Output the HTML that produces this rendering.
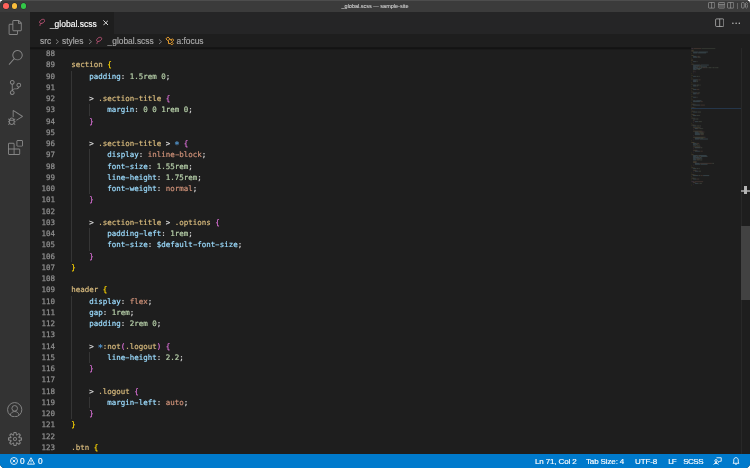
<!DOCTYPE html>
<html lang="en">
<head>
<meta charset="utf-8">
<title>_global.scss — sample-site</title>
<style>
html,body{margin:0;padding:0;}
body{width:750px;height:468px;overflow:hidden;background:#ffffff;position:relative;font-family:"Liberation Sans",sans-serif;}
#win{will-change:transform;border-radius:4.5px;position:absolute;left:0;top:0;width:750px;height:468px;overflow:hidden;background:#1e1e1e;}
.abs{position:absolute;}
#titlebar{left:0;top:0;width:750px;height:11.9px;background:#3b3b3b;}
#titlebar .hl{left:0;top:0;width:750px;height:1px;background:#5a5a5a;opacity:.6}
.tl{position:absolute;width:5.4px;height:5.4px;border-radius:50%;top:3.2px;box-shadow:0 0 0 0.5px rgba(0,0,0,.3);}
#title{left:0;width:750px;top:0;height:12.2px;line-height:12.2px;text-align:center;color:#cfcfcf;font-size:5.5px;-webkit-text-stroke:0.1px;letter-spacing:0;}
#activity{left:0;top:11.9px;width:30px;height:442px;background:#333333;}
#tabs{left:30px;top:11.9px;width:720px;height:22.2px;background:#252526;}
#tab{left:30px;top:11.9px;width:84.2px;height:22.2px;background:#1e1e1e;}
#crumbs{left:30px;top:34.1px;width:720px;height:13.7px;background:#1e1e1e;}
.ui{-webkit-text-stroke:0.15px;position:absolute;white-space:pre;font-size:8.4px;line-height:10px;color:#cccccc;}
#editor{left:30px;top:47.8px;width:720px;height:406.4px;background:#1e1e1e;}
.ln{-webkit-text-stroke:0.25px;position:absolute;left:30px;width:24.9px;text-align:right;height:11.25px;line-height:11.25px;font-family:"DejaVu Sans Mono","Liberation Mono",monospace;font-size:7.475px;color:#8e8e8e;white-space:pre;}
.cl{-webkit-text-stroke:0.2px;position:absolute;left:71.3px;height:11.25px;line-height:11.25px;font-family:"DejaVu Sans Mono","Liberation Mono",monospace;font-size:7.475px;color:#d4d4d4;white-space:pre;}
.hy{display:inline-block;font-style:normal;transform:scaleX(1.7);}
.as{display:inline-block;font-style:normal;width:4.5px;font-size:9px;line-height:0;position:relative;top:2.2px;left:-0.45px;}
.ig{position:absolute;width:1px;background:#353535;}
#shadow{left:30px;top:46.8px;width:661px;height:3.2px;background:linear-gradient(#00000000,#00000088 30%,#00000000);}
#status{left:0;top:454.25px;width:750px;height:13.75px;background:#007acc;}
#status .ui{color:#ffffff;font-size:8px;letter-spacing:-0.13px;line-height:13.75px;top:0.6px;}
#minimap{left:690.5px;top:47.8px;width:51px;height:406.4px;}
#sbar{left:741.3px;top:47.8px;width:8.7px;height:406.4px;border-left:1px solid #282828;box-sizing:border-box;}
#slider{left:741.3px;top:226.3px;width:8.7px;height:73.5px;background:#424242;}
</style>
</head>
<body>
<div id="win">
<div id="titlebar" class="abs"><div class="hl abs"></div>
<div class="tl" style="left:3.3px;background:#fe625b"></div>
<div class="tl" style="left:12px;background:#fbbe3c"></div>
<div class="tl" style="left:20.8px;background:#33c748"></div>
<div id="title" class="abs">_global.scss — sample-site</div>
</div>
<div id="activity" class="abs"></div>
<svg class="abs" style="left:7.5px;top:19.7px" width="15" height="15" viewBox="0 0 24 24" fill="#858585"><path d="M17.5 0h-9L7 1.500V6H2.500L1 7.500v15.070L2.500 24h12.070L16 22.570V18h4.700l1.300-1.430V4.500L17.500 0zm0 2.120l2.380 2.380H17.500V2.120zm-3 20.380h-12v-15H7v9.070L8.500 18h6v4.500zm6-6h-12v-15H16V6h4.500v10.500z"/></svg>
<svg class="abs" style="left:7.5px;top:49.7px" width="15" height="15" viewBox="0 0 24 24" fill="#858585"><path d="M15.250 0a8.250 8.250 0 0 0-6.180 13.720L1 22.880l1.120 1 8.050-9.120A8.251 8.251 0 1 0 15.250.010V0zm0 15a6.750 6.750 0 1 1 0-13.500 6.750 6.750 0 0 1 0 13.500z"/></svg>
<svg class="abs" style="left:7.5px;top:79.7px" width="15" height="15" viewBox="0 0 24 24" fill="#858585"><path d="M21.007 8.222A3.738 3.738 0 0 0 15.045 5.200a3.737 3.737 0 0 0 1.156 6.583 2.988 2.988 0 0 1-2.668 1.670h-2.990a4.456 4.456 0 0 0-2.989 1.165V7.400a3.737 3.737 0 1 0-1.494 0v9.117a3.776 3.776 0 1 0 1.816.099 2.990 2.990 0 0 1 2.668-1.667h2.990a4.484 4.484 0 0 0 4.223-3.039 3.736 3.736 0 0 0 3.250-3.687zM4.565 3.738a2.242 2.242 0 1 1 4.484 0 2.242 2.242 0 0 1-4.484 0zm4.484 16.441a2.242 2.242 0 1 1-4.484 0 2.242 2.242 0 0 1 4.484 0zm8.221-9.715a2.242 2.242 0 1 1 0-4.485 2.242 2.242 0 0 1 0 4.485z"/></svg>
<svg class="abs" style="left:7.5px;top:109.7px" width="15" height="15" viewBox="0 0 24 24" fill="#858585"><path d="M10.940 13.500l-1.320 1.320a3.730 3.730 0 0 0-7.240 0L1.060 13.500 0 14.560l1.720 1.720-.220.220V18H0v1.500h1.500v.080c.077.489.214.966.410 1.420L0 22.940 1.060 24l1.650-1.650A4.308 4.308 0 0 0 6 24a4.310 4.310 0 0 0 3.290-1.650L10.940 24 12 22.940 10.090 21c.198-.464.336-.951.410-1.450v-.100H12V18h-1.500v-1.500l-.220-.220L12 14.560l-1.060-1.060zM6 13.500a2.250 2.250 0 0 1 2.250 2.250h-4.500A2.250 2.250 0 0 1 6 13.500zm3 6a3.330 3.330 0 0 1-3 3 3.330 3.330 0 0 1-3-3v-2.250h6v2.250zm14.760-9.900v1.260L13.500 17.370V15.600l8.500-5.370L9 2v9.460a5.070 5.070 0 0 0-1.500-.720V.630L8.640 0l15.120 9.600z"/></svg>
<svg class="abs" style="left:7.5px;top:139.7px" width="15" height="15" viewBox="0 0 24 24" fill="#858585"><path d="M13.500 1.500L15 0h7.500L24 1.500V9l-1.500 1.500H15L13.500 9V1.500zm1.500 0V9h7.500V1.500H15zM0 15V6l1.500-1.500H9L10.500 6v7.500H18l1.500 1.500v7.500L18 24H1.500L0 22.500V15zm9-1.500V6H1.500v7.500H9zM9 15H1.500v7.500H9V15zm1.500 7.500H18V15h-7.500v7.500z"/></svg>
<svg class="abs" style="left:7.3px;top:401.6px" width="15.4" height="15.4" viewBox="0 0 16 16" fill="none" stroke="#858585" stroke-width="1"><circle cx="8" cy="8" r="7.4"/><circle cx="8" cy="6.6" r="2.9"/><path d="M3.4 13.6c.5-2.300 2.300-3.700 4.600-3.700s4.100 1.400 4.600 3.700"/></svg>
<svg class="abs" style="left:7px;top:431.2px" width="16" height="16" viewBox="0 0 16 16" fill="#858585"><path fill-rule="evenodd" clip-rule="evenodd" d="M9.100 4.400L8.600 2H7.400l-.5 2.400-.7.300-2-1.300-.9.800 1.300 2-.2.700-2.400.5v1.200l2.400.5.300.8-1.300 2 .8.800 2-1.300.8.300.4 2.300h1.200l.5-2.400.8-.3 2 1.300.8-.8-1.300-2 .3-.8 2.300-.4V7.400l-2.400-.5-.3-.8 1.300-2-.8-.8-2 1.300-.7-.2zM9.400 1l.5 2.400L12 2.100l2 2-1.400 2.100 2.400.4v2.800l-2.400.5L14 12l-2 2-2.100-1.400-.5 2.400H6.600l-.5-2.400L4 13.900l-2-2 1.400-2.100L1 9.400V6.600l2.400-.5L2.100 4l2-2 2.100 1.400.4-2.400h2.800zm.6 7c0 1.100-.9 2-2 2s-2-.9-2-2 .9-2 2-2 2 .9 2 2zM8 9c.6 0 1-.4 1-1s-.4-1-1-1-1 .4-1 1 .4 1 1 1z"/></svg>

<div id="tabs" class="abs"></div>
<div id="tab" class="abs"></div>
<div class="ui" style="left:49.9px;top:18.6px;color:#ffffff;font-size:8.5px">_global.scss</div>
<div id="crumbs" class="abs"></div>
<div class="ui" style="left:40px;top:36px;color:#a9a9a9">src</div>
<div class="ui" style="left:62px;top:36px;color:#a9a9a9">styles</div>
<div class="ui" style="left:107.6px;top:36px;color:#a9a9a9">_global.scss</div>
<div class="ui" style="left:176.5px;top:36px;color:#a9a9a9">a:focus</div>
<div id="editor" class="abs"></div>
<div class="ln" style="top:48.20px">88</div>
<div class="ln" style="top:59.45px">89</div>
<div class="cl" style="top:59.45px"><span style="color:#d7ba7d">section </span><span style="color:#ffd700">{</span></div>
<div class="ln" style="top:70.70px">90</div>
<div class="cl" style="top:70.70px"><span style="color:#d4d4d4">    </span><span style="color:#9cdcfe">padding</span><span style="color:#d4d4d4">: </span><span style="color:#b5cea8">1.5rem 0</span><span style="color:#d4d4d4">;</span></div>
<div class="ln" style="top:81.95px">91</div>
<div class="ln" style="top:93.20px">92</div>
<div class="cl" style="top:93.20px"><span style="color:#d4d4d4">    &gt; </span><span style="color:#d7ba7d">.section<i class="hy">-</i>title </span><span style="color:#da70d6">{</span></div>
<div class="ln" style="top:104.45px">93</div>
<div class="cl" style="top:104.45px"><span style="color:#d4d4d4">        </span><span style="color:#9cdcfe">margin</span><span style="color:#d4d4d4">: </span><span style="color:#b5cea8">0 0 1rem 0</span><span style="color:#d4d4d4">;</span></div>
<div class="ln" style="top:115.70px">94</div>
<div class="cl" style="top:115.70px"><span style="color:#d4d4d4">    </span><span style="color:#da70d6">}</span></div>
<div class="ln" style="top:126.95px">95</div>
<div class="ln" style="top:138.20px">96</div>
<div class="cl" style="top:138.20px"><span style="color:#d4d4d4">    &gt; </span><span style="color:#d7ba7d">.section<i class="hy">-</i>title </span><span style="color:#d4d4d4">&gt; </span><span style="color:#569cd6"><i class="as">*</i> </span><span style="color:#da70d6">{</span></div>
<div class="ln" style="top:149.45px">97</div>
<div class="cl" style="top:149.45px"><span style="color:#d4d4d4">        </span><span style="color:#9cdcfe">display</span><span style="color:#d4d4d4">: </span><span style="color:#ce9178">inline<i class="hy">-</i>block</span><span style="color:#d4d4d4">;</span></div>
<div class="ln" style="top:160.70px">98</div>
<div class="cl" style="top:160.70px"><span style="color:#d4d4d4">        </span><span style="color:#9cdcfe">font<i class="hy">-</i>size</span><span style="color:#d4d4d4">: </span><span style="color:#b5cea8">1.55rem</span><span style="color:#d4d4d4">;</span></div>
<div class="ln" style="top:171.95px">99</div>
<div class="cl" style="top:171.95px"><span style="color:#d4d4d4">        </span><span style="color:#9cdcfe">line<i class="hy">-</i>height</span><span style="color:#d4d4d4">: </span><span style="color:#b5cea8">1.75rem</span><span style="color:#d4d4d4">;</span></div>
<div class="ln" style="top:183.20px">100</div>
<div class="cl" style="top:183.20px"><span style="color:#d4d4d4">        </span><span style="color:#9cdcfe">font<i class="hy">-</i>weight</span><span style="color:#d4d4d4">: </span><span style="color:#ce9178">normal</span><span style="color:#d4d4d4">;</span></div>
<div class="ln" style="top:194.45px">101</div>
<div class="cl" style="top:194.45px"><span style="color:#d4d4d4">    </span><span style="color:#da70d6">}</span></div>
<div class="ln" style="top:205.70px">102</div>
<div class="ln" style="top:216.95px">103</div>
<div class="cl" style="top:216.95px"><span style="color:#d4d4d4">    &gt; </span><span style="color:#d7ba7d">.section<i class="hy">-</i>title </span><span style="color:#d4d4d4">&gt; </span><span style="color:#d7ba7d">.options </span><span style="color:#da70d6">{</span></div>
<div class="ln" style="top:228.20px">104</div>
<div class="cl" style="top:228.20px"><span style="color:#d4d4d4">        </span><span style="color:#9cdcfe">padding<i class="hy">-</i>left</span><span style="color:#d4d4d4">: </span><span style="color:#b5cea8">1rem</span><span style="color:#d4d4d4">;</span></div>
<div class="ln" style="top:239.45px">105</div>
<div class="cl" style="top:239.45px"><span style="color:#d4d4d4">        </span><span style="color:#9cdcfe">font<i class="hy">-</i>size</span><span style="color:#d4d4d4">: </span><span style="color:#9cdcfe">$default<i class="hy">-</i>font<i class="hy">-</i>size</span><span style="color:#d4d4d4">;</span></div>
<div class="ln" style="top:250.70px">106</div>
<div class="cl" style="top:250.70px"><span style="color:#d4d4d4">    </span><span style="color:#da70d6">}</span></div>
<div class="ln" style="top:261.95px">107</div>
<div class="cl" style="top:261.95px"><span style="color:#ffd700">}</span></div>
<div class="ln" style="top:273.20px">108</div>
<div class="ln" style="top:284.45px">109</div>
<div class="cl" style="top:284.45px"><span style="color:#d7ba7d">header </span><span style="color:#ffd700">{</span></div>
<div class="ln" style="top:295.70px">110</div>
<div class="cl" style="top:295.70px"><span style="color:#d4d4d4">    </span><span style="color:#9cdcfe">display</span><span style="color:#d4d4d4">: </span><span style="color:#ce9178">flex</span><span style="color:#d4d4d4">;</span></div>
<div class="ln" style="top:306.95px">111</div>
<div class="cl" style="top:306.95px"><span style="color:#d4d4d4">    </span><span style="color:#9cdcfe">gap</span><span style="color:#d4d4d4">: </span><span style="color:#b5cea8">1rem</span><span style="color:#d4d4d4">;</span></div>
<div class="ln" style="top:318.20px">112</div>
<div class="cl" style="top:318.20px"><span style="color:#d4d4d4">    </span><span style="color:#9cdcfe">padding</span><span style="color:#d4d4d4">: </span><span style="color:#b5cea8">2rem 0</span><span style="color:#d4d4d4">;</span></div>
<div class="ln" style="top:329.45px">113</div>
<div class="ln" style="top:340.70px">114</div>
<div class="cl" style="top:340.70px"><span style="color:#d4d4d4">    &gt; </span><span style="color:#569cd6"><i class="as">*</i></span><span style="color:#d7ba7d">:not</span><span style="color:#da70d6">(</span><span style="color:#d7ba7d">.logout</span><span style="color:#da70d6">)</span><span style="color:#d4d4d4"> </span><span style="color:#da70d6">{</span></div>
<div class="ln" style="top:351.95px">115</div>
<div class="cl" style="top:351.95px"><span style="color:#d4d4d4">        </span><span style="color:#9cdcfe">line<i class="hy">-</i>height</span><span style="color:#d4d4d4">: </span><span style="color:#b5cea8">2.2</span><span style="color:#d4d4d4">;</span></div>
<div class="ln" style="top:363.20px">116</div>
<div class="cl" style="top:363.20px"><span style="color:#d4d4d4">    </span><span style="color:#da70d6">}</span></div>
<div class="ln" style="top:374.45px">117</div>
<div class="ln" style="top:385.70px">118</div>
<div class="cl" style="top:385.70px"><span style="color:#d4d4d4">    &gt; </span><span style="color:#d7ba7d">.logout </span><span style="color:#da70d6">{</span></div>
<div class="ln" style="top:396.95px">119</div>
<div class="cl" style="top:396.95px"><span style="color:#d4d4d4">        </span><span style="color:#9cdcfe">margin<i class="hy">-</i>left</span><span style="color:#d4d4d4">: </span><span style="color:#ce9178">auto</span><span style="color:#d4d4d4">;</span></div>
<div class="ln" style="top:408.20px">120</div>
<div class="cl" style="top:408.20px"><span style="color:#d4d4d4">    </span><span style="color:#da70d6">}</span></div>
<div class="ln" style="top:419.45px">121</div>
<div class="cl" style="top:419.45px"><span style="color:#ffd700">}</span></div>
<div class="ln" style="top:430.70px">122</div>
<div class="ln" style="top:441.95px">123</div>
<div class="cl" style="top:441.95px"><span style="color:#d7ba7d">.btn </span><span style="color:#ffd700">{</span></div>
<div class="ln" style="top:453.20px">124</div>
<div class="ig" style="left:71px;top:70.70px;height:191.25px"></div>
<div class="ig" style="left:89px;top:104.45px;height:11.25px"></div>
<div class="ig" style="left:89px;top:149.45px;height:45.00px"></div>
<div class="ig" style="left:89px;top:228.20px;height:22.50px"></div>
<div class="ig" style="left:71px;top:295.70px;height:123.75px"></div>
<div class="ig" style="left:89px;top:351.95px;height:11.25px"></div>
<div class="ig" style="left:89px;top:396.95px;height:11.25px"></div>
<div id="shadow" class="abs"></div>
<div id="minimap" class="abs"><svg width="51" height="160" viewBox="0 0 51 160" style="position:absolute;left:0;top:0" fill="none" stroke-width="0.55" opacity="0.32">
<path stroke="#c586c0" d="M0.40 0.55h1.74M0.40 133.66h2.61"/>
<path stroke="#ce9178" d="M2.57 0.55h7.39M6.49 8.38h2.17M7.36 18.82h2.17M11.71 19.69h3.04M7.36 31.87h2.17M6.06 41.44h2.17M5.62 45.79h2.17M9.54 53.62h2.17M9.54 57.10h4.35M7.79 60.58h3.04M7.79 84.07h5.66M9.54 86.68h3.04M6.06 95.38h2.17M9.54 103.21h2.17M7.36 108.43h2.17M5.62 111.04h3.48M9.10 115.39h11.74M9.54 127.57h2.17M6.06 131.05h2.17M3.44 133.66h8.70"/>
<path stroke="#8a9a80" d="M10.41 0.55h13.92"/>
<path stroke="#d7ba7d" d="M0.40 2.29h2.17M0.40 3.16h1.74M0.40 7.51h1.74M0.40 11.86h1.30M0.40 12.73h0.87M0.40 16.21h1.74M2.14 23.17h1.30M0.40 27.52h0.43M0.40 31.00h0.87M0.40 36.22h0.87M0.40 40.57h1.30M0.40 44.05h1.30M0.40 48.40h0.87M0.40 51.88h0.43M0.40 56.23h3.04M0.40 59.71h3.04M0.40 63.19h2.17M0.40 66.67h2.61M0.40 70.15h2.17M2.14 72.76h0.87M0.40 77.11h3.04M2.14 79.72h6.96M2.14 83.20h8.70M2.14 89.29h11.74M0.40 94.51h2.61M2.14 98.86h6.96M2.14 102.34h3.92M0.40 106.69h1.74M2.14 113.65h3.48M2.14 114.52h3.04M0.40 119.74h2.17M2.14 122.35h3.04M0.40 126.70h3.04M0.40 130.18h3.04M2.14 134.53h1.74"/>
<path stroke="#ffd700" d="M2.57 3.16h0.43M0.40 5.77h0.43M2.57 7.51h0.43M0.40 10.12h0.43M1.71 12.73h0.43M0.40 14.47h0.43M2.57 16.21h0.43M0.40 25.78h0.43M1.27 27.52h0.43M0.40 29.26h0.43M1.71 31.00h0.43M0.40 34.48h0.43M1.71 36.22h0.43M0.40 38.83h0.43M2.14 40.57h0.43M0.40 42.31h0.43M2.14 44.05h0.43M0.40 46.66h0.43M1.71 48.40h0.43M0.40 50.14h0.43M1.27 51.88h0.43M0.40 54.49h0.43M3.88 56.23h0.43M0.40 57.97h0.43M3.88 59.71h0.43M0.40 61.45h0.43M3.01 63.19h0.43M0.40 64.93h0.43M3.44 66.67h0.43M0.40 68.41h0.43M3.01 70.15h0.43M0.40 75.37h0.43M3.88 77.11h0.43M0.40 92.77h0.43M3.44 94.51h0.43M0.40 104.95h0.43M2.57 106.69h0.43M0.40 118.00h0.43M3.01 119.74h0.43M0.40 124.96h0.43M3.88 126.70h0.43M0.40 128.44h0.43M3.88 130.18h0.43M0.40 131.92h0.43M0.40 137.14h0.43"/>
<path stroke="#9cdcfe" d="M2.14 4.03h4.79M7.79 4.03h9.13M2.14 4.90h3.92M6.93 4.90h8.27M2.14 8.38h2.61M2.14 9.25h3.92M2.14 13.60h2.61M2.14 17.08h6.96M9.97 17.08h7.83M2.14 17.95h5.66M2.14 18.82h2.61M9.97 18.82h6.09M2.14 19.69h4.35M2.14 20.56h2.17M5.19 20.56h5.22M2.14 21.43h3.04M2.14 28.39h2.61M2.14 31.87h4.35M2.14 32.74h2.61M2.14 33.61h3.04M2.14 37.09h2.61M2.14 37.96h3.04M2.14 41.44h3.04M2.14 44.92h3.92M2.14 45.79h2.61M2.14 49.27h2.61M2.14 52.75h2.17M5.19 52.75h5.22M2.14 53.62h6.53M2.14 57.10h6.53M2.14 60.58h3.04M2.14 64.06h3.92M2.14 67.54h3.04M2.14 71.02h2.17M3.88 73.63h3.04M2.14 77.98h3.04M3.88 80.59h2.61M3.88 84.07h3.04M3.88 84.94h3.92M3.88 85.81h4.79M3.88 86.68h4.79M3.88 90.16h5.22M3.88 91.03h3.92M8.67 91.03h8.27M2.14 95.38h3.04M2.14 96.25h1.30M2.14 97.12h3.04M3.88 99.73h4.79M3.88 103.21h4.79M2.14 107.56h4.35M7.36 107.56h8.27M2.14 108.43h2.61M9.97 108.43h6.53M2.14 109.30h5.66M2.14 110.17h2.17M5.19 110.17h6.09M2.14 111.04h2.61M2.14 111.91h3.04M3.88 115.39h4.35M3.88 116.26h5.22M9.97 116.26h6.53M2.14 120.61h2.61M3.88 123.22h3.04M2.14 127.57h4.79M12.14 127.57h6.09M2.14 131.05h3.04M3.88 135.40h3.04"/>
<path stroke="#d4d4d4" d="M6.93 4.03h0.43M6.06 4.90h0.43M4.75 8.38h0.43M6.06 9.25h0.43M4.75 13.60h0.43M9.10 17.08h0.43M7.79 17.95h0.43M4.75 18.82h0.43M6.49 19.69h0.43M4.32 20.56h0.43M5.19 21.43h0.43M4.75 28.39h0.43M6.49 31.87h0.43M4.75 32.74h0.43M5.19 33.61h0.43M4.75 37.09h0.43M5.19 37.96h0.43M5.19 41.44h0.43M6.06 44.92h0.43M4.75 45.79h0.43M4.75 49.27h0.43M4.32 52.75h0.43M8.67 53.62h0.43M8.67 57.10h0.43M5.19 60.58h0.43M6.06 64.06h0.43M5.19 67.54h0.43M4.32 71.02h0.43M6.93 73.63h0.43M5.19 77.98h0.43M6.49 80.59h0.43M6.93 84.07h0.43M7.79 84.94h0.43M8.67 85.81h0.43M8.67 86.68h0.43M9.10 90.16h0.43M7.79 91.03h0.43M5.19 95.38h0.43M3.44 96.25h0.43M5.19 97.12h0.43M8.67 99.73h0.43M8.67 103.21h0.43M6.49 107.56h0.43M4.75 108.43h0.43M7.79 109.30h0.43M4.32 110.17h0.43M4.75 111.04h0.43M5.19 111.91h0.43M8.23 115.39h0.43M9.10 116.26h0.43M4.75 120.61h0.43M6.93 123.22h0.43M6.93 127.57h0.43M5.19 131.05h0.43M6.93 135.40h0.43"/>
<path stroke="#b5cea8" d="M5.62 8.38h0.43M6.93 9.25h2.61M5.62 13.60h0.87M8.67 17.95h1.74M5.62 18.82h1.30M7.36 19.69h0.43M8.23 19.69h1.30M9.97 19.69h1.30M15.19 19.69h0.87M16.49 19.69h0.87M17.80 19.69h2.61M20.84 19.69h0.43M21.71 19.69h1.30M23.45 19.69h1.30M25.19 19.69h2.17M6.06 21.43h0.43M6.93 21.43h2.17M5.62 28.39h1.74M7.79 28.39h0.87M5.62 32.74h0.87M6.06 33.61h0.87M5.62 37.09h2.61M8.67 37.09h0.87M6.06 37.96h0.87M6.93 44.92h2.17M5.62 49.27h0.87M6.06 60.58h1.30M6.93 64.06h3.04M6.06 67.54h1.74M8.23 67.54h0.87M5.19 71.02h2.17M7.79 73.63h3.04M6.06 77.98h2.61M9.10 77.98h0.87M7.36 80.59h0.43M8.23 80.59h0.43M9.10 80.59h1.74M11.28 80.59h0.87M8.67 84.94h3.48M9.54 85.81h3.48M9.97 90.16h2.17M4.32 96.25h2.17M6.06 97.12h1.74M8.23 97.12h0.87M9.54 99.73h1.74M5.62 108.43h1.30M8.67 109.30h1.74M6.06 111.91h2.61M9.10 111.91h2.17M21.28 115.39h1.74M5.62 120.61h1.74M7.79 120.61h0.87M7.79 123.22h2.17M7.79 127.57h1.30M7.79 135.40h0.43M8.67 135.40h2.17"/>
<path stroke="#da70d6" d="M3.88 23.17h0.43M3.88 24.04h0.43M2.14 24.91h0.43M3.44 72.76h0.43M2.14 74.50h0.43M9.54 79.72h0.43M2.14 81.46h0.43M11.28 83.20h0.43M2.14 87.55h0.43M14.32 89.29h0.43M2.14 91.90h0.43M9.54 98.86h0.43M2.14 100.60h0.43M6.49 102.34h0.43M2.14 104.08h0.43M5.62 114.52h0.43M2.14 117.13h0.43M5.62 122.35h0.43M2.14 124.09h0.43M4.32 134.53h0.43M2.14 136.27h0.43"/>
</svg></div>
<div id="sbar" class="abs"></div>
<div id="slider" class="abs"></div>
<div class="abs" style="left:691px;top:108.2px;width:50.3px;height:1.1px;background:#25364a"></div>
<div class="abs" style="left:741.3px;top:190.2px;width:8.7px;height:1.7px;background:#8c8c8c"></div>
<div class="abs" style="left:744px;top:186px;width:3.3px;height:7.6px;background:#b4b4b4"></div>
<div id="status" class="abs">
<div class="ui" style="left:20px;font-size:8.3px">0</div>
<div class="ui" style="left:37.9px;font-size:8.3px">0</div>
<div class="ui" style="left:535px">Ln 71, Col 2</div>
<div class="ui" style="left:586px">Tab Size: 4</div>
<div class="ui" style="left:635px">UTF-8</div>
<div class="ui" style="left:668.2px;letter-spacing:-0.8px">LF</div>
<div class="ui" style="left:683.2px;letter-spacing:-0.5px">SCSS</div>
</div>
<!-- tab sass icon -->
<svg class="abs" style="left:37.900px;top:18px" width="7.500" height="8.125" viewBox="0 0 12 13" fill="none" stroke="#c9587c" stroke-width="1.350" stroke-linecap="round" stroke-linejoin="round"><path d="M3.100 12 C3.300 10.800 3.700 9.600 4.600 8.700 C7 8.800 10.600 7 10.700 4.200 C10.800 1.700 7.200 1.500 5.100 3 C3.100 4.400 2 6.600 2.800 7.800 C3.300 8.600 4.200 8.700 4.600 8.700"/></svg>
<!-- tab close -->
<svg class="abs" style="left:102.800px;top:20.100px" width="5.600" height="5.600" viewBox="0 0 6 6" fill="none" stroke="#dddddd" stroke-width="1.050" stroke-linecap="round"><path d="M0.700 0.700L5.300 5.300M5.300 0.700L0.700 5.300"/></svg>
<!-- breadcrumb chevrons -->
<svg class="abs" style="left:54.800px;top:38.800px" width="4.500" height="5.400" viewBox="0 0 4.500 5.400" fill="none" stroke="#9a9a9a" stroke-width="0.750"><path d="M0.900 0.300L3.500 2.700L0.900 5.100"/></svg>
<svg class="abs" style="left:87.600px;top:38.800px" width="4.500" height="5.400" viewBox="0 0 4.500 5.400" fill="none" stroke="#9a9a9a" stroke-width="0.750"><path d="M0.900 0.300L3.500 2.700L0.900 5.100"/></svg>
<svg class="abs" style="left:158.300px;top:38.800px" width="4.500" height="5.400" viewBox="0 0 4.500 5.400" fill="none" stroke="#9a9a9a" stroke-width="0.750"><path d="M0.900 0.300L3.500 2.700L0.900 5.100"/></svg>
<!-- breadcrumb sass icon -->
<svg class="abs" style="left:95px;top:36px" width="7.500" height="8.125" viewBox="0 0 12 13" fill="none" stroke="#c9587c" stroke-width="1.350" stroke-linecap="round" stroke-linejoin="round"><path d="M3.100 12 C3.300 10.800 3.700 9.600 4.600 8.700 C7 8.800 10.600 7 10.700 4.200 C10.800 1.700 7.200 1.500 5.100 3 C3.100 4.400 2 6.600 2.800 7.800 C3.300 8.600 4.200 8.700 4.600 8.700"/></svg>
<!-- symbol icon -->
<svg class="abs" style="left:164.600px;top:35.500px" width="9.600" height="9.600" viewBox="0 0 16 16" fill="none" stroke="#f0a431" stroke-width="1.600" stroke-linejoin="round"><path d="M4.800 1.600L8 4.800L4.800 8L1.600 4.800z"/><path d="M12.300 4.600L14.600 6.900L12.300 9.200L10 6.900z"/><path d="M11.300 10.300L13.600 12.600L11.300 14.900L9 12.600z"/><path d="M7.800 5.400L10.200 6.600M5.800 7.800V12.600H9"/></svg>
<!-- editor actions: split -->
<svg class="abs" style="left:715px;top:17.600px" width="9.400" height="9.400" viewBox="0 0 16 16" fill="none" stroke="#c5c5c5" stroke-width="1.200"><rect x="1" y="1.500" width="14" height="13" rx="1.800"/><path d="M8 1.500v13"/></svg>
<!-- ellipsis -->
<svg class="abs" style="left:731px;top:21.600px" width="10" height="2.500" viewBox="0 0 10 2.500" fill="#c5c5c5"><circle cx="1.900" cy="1.250" r="0.750"/><circle cx="5.100" cy="1.250" r="0.750"/><circle cx="8.300" cy="1.250" r="0.750"/></svg>
<!-- titlebar layout icons -->
<svg class="abs" style="left:708px;top:2.400px" width="7.200" height="6.600" viewBox="0 0 12 11" fill="none" stroke="#aaaaaa" stroke-width="1"><rect x="0.800" y="0.800" width="10.400" height="9.400" rx="1.200"/><path d="M6 0.800v9.400"/></svg>
<svg class="abs" style="left:717.700px;top:2.400px" width="7.200" height="6.600" viewBox="0 0 12 11" fill="none" stroke="#aaaaaa" stroke-width="1"><rect x="0.800" y="0.800" width="10.400" height="9.400" rx="1.200"/><rect x="1.300" y="4.300" width="9.400" height="5.400" fill="#5c5c5c" stroke="none"/><path d="M0.800 4h10.400"/></svg>
<svg class="abs" style="left:727.300px;top:2.400px" width="7.200" height="6.600" viewBox="0 0 12 11" fill="none" stroke="#aaaaaa" stroke-width="1"><rect x="0.800" y="0.800" width="10.400" height="9.400" rx="1.200"/><path d="M6 0.800v9.400"/></svg>
<div class="abs" style="left:737.200px;top:2.600px;width:0.600px;height:6.200px;background:#666666"></div>
<svg class="abs" style="left:741px;top:2.400px" width="7.200" height="6.600" viewBox="0 0 12 11" fill="none" stroke="#aaaaaa" stroke-width="1"><rect x="0.800" y="0.800" width="4.600" height="9.400" rx="1.800"/><path d="M7.500 2.200L9.300 0.900L11.200 2.600L10 4.200L11.300 5.500L10 6.800L11.200 8.400L9.300 10.100L7.500 8.800L7.500 2.200z"/></svg>
<!-- status bar icons -->
<svg class="abs" style="left:9.600px;top:456.900px" width="8" height="8" viewBox="0 0 16 16" fill="none" stroke="#ffffff" stroke-width="1.700"><circle cx="8" cy="8" r="7"/><path d="M5.200 5.200l5.600 5.600M10.800 5.200l-5.600 5.600"/></svg>
<svg class="abs" style="left:27.400px;top:456.900px" width="8" height="8" viewBox="0 0 16 16" fill="none" stroke="#ffffff" stroke-width="1.700" stroke-linejoin="round"><path d="M8 1.500L15 14.300H1L8 1.500z"/><path d="M8 6v4.500M8 11.500v1.300"/></svg>
<svg class="abs" style="left:713px;top:456.900px" width="8.800" height="8" viewBox="0 0 17.600 16" fill="none" stroke="#ffffff" stroke-width="1.700" stroke-linejoin="round"><path d="M7 1.500h9.500v7h-3l-2.500 2.300v-2.300"/><circle cx="6" cy="7.500" r="2.400"/><path d="M1.300 15.300l4.700-5.300 4.700 5.300M3.500 13h5"/></svg>
<svg class="abs" style="left:732.400px;top:456.900px" width="8" height="8" viewBox="0 0 16 16" fill="none" stroke="#ffffff" stroke-width="1.700" stroke-linejoin="round"><path d="M8 1.300c-2.800 0-4.500 2-4.500 4.700v4.200L2 12.500h12l-1.500-2.300V6c0-2.700-1.700-4.700-4.500-4.700z"/><path d="M6.300 13.200a1.700 1.700 0 0 0 3.400 0"/></svg>

</div>
</body>
</html>
